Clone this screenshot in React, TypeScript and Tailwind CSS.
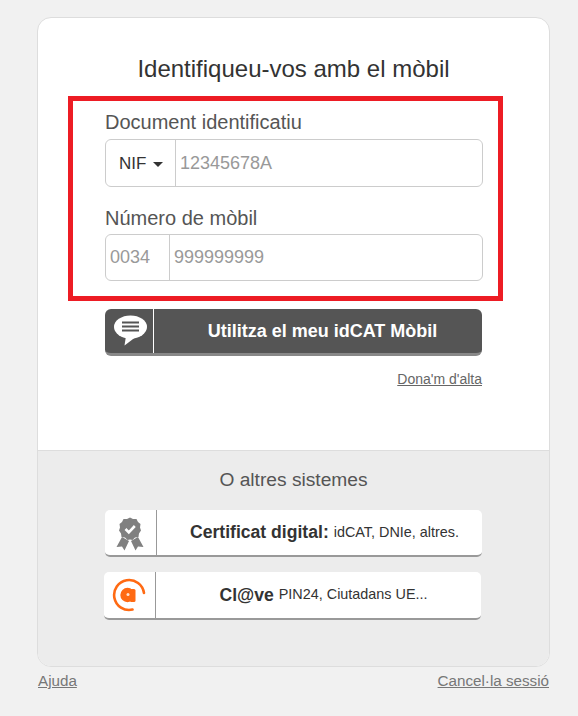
import React from "react";

const BubbleIcon = () => (
  <svg width="35" height="36" viewBox="0 0 35 36">
    <ellipse cx="17.5" cy="14" rx="16.5" ry="11.5" fill="#fff" />
    <path d="M13 23 L11.5 32.5 L22 24.5 Z" fill="#fff" />
    <path d="M9 9.5H26M9 13.5H26M9 17.5H26" stroke="#555" strokeWidth="1.8" />
  </svg>
);

const CertIcon = () => (
  <svg width="28" height="34" viewBox="0 0 28 34">
    <path d="M6 20 L0.5 30 L6 29.5 L8.5 33.5 L13 24 Z" fill="#808080" />
    <path d="M22 20 L27.5 30 L22 29.5 L19.5 33.5 L15 24 Z" fill="#808080" />
    <path
      d="M14 0.5 L17 2 L20.5 2 L22 5 L24.5 7 L24 10.5 L25 13.5 L23 16.5 L22.5 20 L19 20.5 L16.5 23 L14 22.5 L11.5 23 L9 20.5 L5.5 20 L5 16.5 L3 13.5 L4 10.5 L3.5 7 L6 5 L7.5 2 L11 2 Z"
      fill="#808080"
    />
    <path d="M9.5 12 L12.8 15.3 L18.8 9" fill="none" stroke="#fff" strokeWidth="2.6" />
  </svg>
);

const ClaveIcon = () => (
  <svg width="34" height="34" viewBox="0 0 34 34">
    <path
      d="M32 15 A15 15 0 1 0 20.5 31.6"
      fill="none"
      stroke="#ff6a13"
      strokeWidth="2.6"
      strokeLinecap="round"
    />
    <circle cx="15.5" cy="17" r="7.2" fill="#ff6a13" />
    <rect x="18" y="11" width="5.5" height="13" rx="1.5" fill="#ff6a13" />
    <circle cx="16" cy="16.5" r="1.5" fill="#ffe3d0" />
  </svg>
);

export default function App() {
  return (
    <div className="min-h-[716px] bg-[#f1f1f1] pl-[37px] pt-[17px] font-['Liberation_Sans',Arial,sans-serif]">
      <div className="w-[513px]">
        <div className="h-[650px] overflow-hidden rounded-[14px] border border-[#dddddd] bg-white">
          <div className="h-[432px]">
            <h1 className="pt-[36px] text-center text-[24px] leading-[30px] font-normal text-[#333333]">
              Identifiqueu-vos amb el mòbil
            </h1>

            <div className="mt-[12px] ml-[30px] h-[205px] w-[435px] border-[5px] border-[#ed1c24] pt-[9px] pl-[32px]">
              <div className="text-[20px] leading-[24px] text-[#555555]">Document identificatiu</div>
              <div className="mt-[5px] flex h-[48px] w-[378px] rounded-[6px] border border-[#cccccc]">
                <div className="flex w-[70px] items-center border-r border-[#cccccc] pt-[1px] pl-[13px] text-[17px] text-[#333333]">
                  NIF
                  <span className="mt-[2px] ml-[7px] h-0 w-0 border-x-[5px] border-t-[5px] border-x-transparent border-t-[#333333]"></span>
                </div>
                <div className="flex items-center pl-[4px] text-[18px] text-[#999999]">12345678A</div>
              </div>
              <div className="mt-[19px] text-[20px] leading-[24px] text-[#555555]">Número de mòbil</div>
              <div className="mt-[4px] flex h-[47px] w-[378px] rounded-[6px] border border-[#cccccc]">
                <div className="flex w-[64px] items-center border-r border-[#cccccc] pl-[4px] text-[18px] text-[#999999]">
                  0034
                </div>
                <div className="flex items-center pl-[4px] text-[18px] text-[#999999]">999999999</div>
              </div>
            </div>

            <div className="mt-[8px] ml-[67px] flex h-[47px] w-[377px] rounded-[6px] border-b-[3px] border-[#888888] bg-[#555555]">
              <div className="flex w-[49px] border-r border-white pt-[4px] pl-[8px]">
                <BubbleIcon />
              </div>
              <div className="flex flex-1 items-center justify-center pl-[9px] text-[18px] font-bold text-white">
                Utilitza el meu idCAT Mòbil
              </div>
            </div>

            <div className="mt-[14px] mr-[67px] text-right text-[14px] leading-[18px] text-[#666666] underline">
              Dona'm d'alta
            </div>
          </div>

          <div className="h-[217px] border-t border-[#dddddd] bg-[#ececec]">
            <div className="pt-[17px] text-center text-[19.2px] leading-[24px] text-[#555555]">O altres sistemes</div>

            <div className="mt-[18px] ml-[67px] flex h-[47px] w-[377px] rounded-[5px] border-b-[2px] border-[#999999] bg-white">
              <div className="flex w-[52px] items-center border-r border-[#999999] pt-[2px] pl-[11px]">
                <CertIcon />
              </div>
              <div className="flex flex-1 items-center justify-center pl-[10px] text-[#333333]">
                <span className="text-[17.6px] font-bold">Certificat digital:</span>
                <span className="ml-[5px] text-[14.4px]">idCAT, DNIe, altres.</span>
              </div>
            </div>

            <div className="mt-[15px] ml-[66px] flex h-[48px] w-[377px] rounded-[5px] border-b-[2px] border-[#999999] bg-white">
              <div className="flex w-[52px] items-center border-r border-[#999999] pl-[8px]">
                <ClaveIcon />
              </div>
              <div className="flex flex-1 items-center justify-center pl-[10px] text-[#333333]">
                <span className="text-[17.6px] font-bold">Cl@ve</span>
                <span className="ml-[5px] text-[14.4px]">PIN24, Ciutadans UE...</span>
              </div>
            </div>
          </div>
        </div>

        <div className="mt-[4px] flex justify-between pr-[1px] pl-[1px] text-[15.2px] leading-[20px] text-[#777777] underline">
          <span>Ajuda</span>
          <span>Cancel·la sessió</span>
        </div>
      </div>
    </div>
  );
}
